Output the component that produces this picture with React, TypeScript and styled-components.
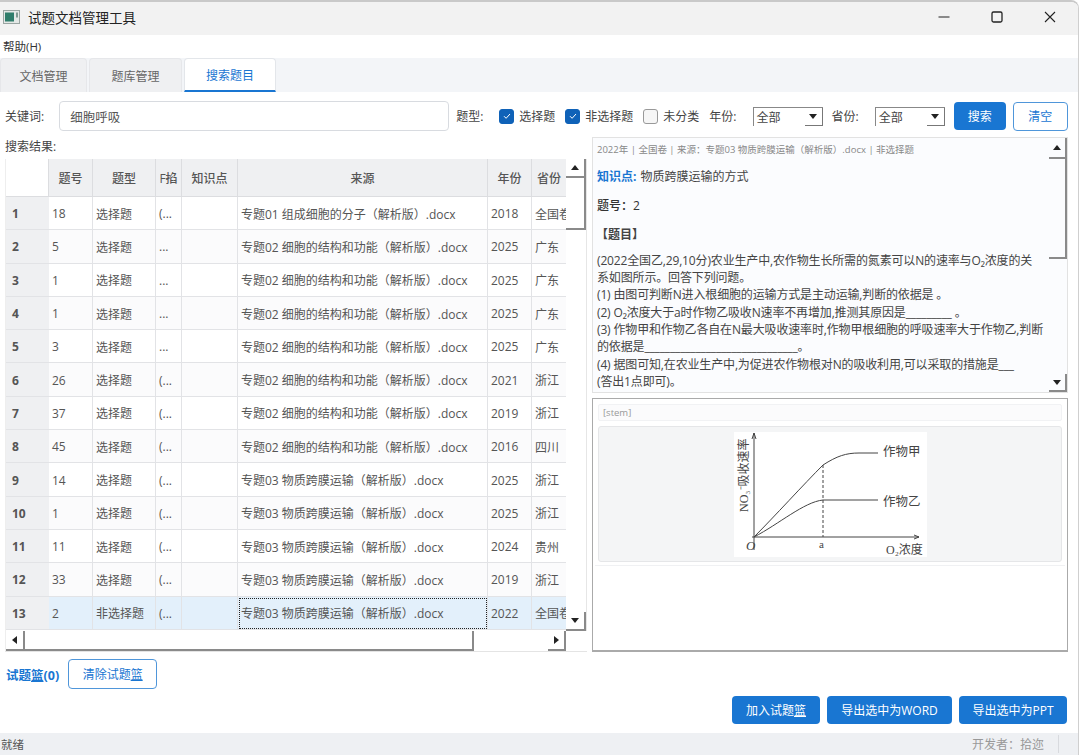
import styled, { createGlobalStyle } from 'styled-components';

const FONT = '"Open Sans", "Noto Sans CJK SC", sans-serif';

const rows = [
  ['1', '18', '选择题', '(...', '专题01 组成细胞的分子（解析版）.docx', '2018', '全国卷'],
  ['2', '5', '选择题', '...', '专题02 细胞的结构和功能（解析版）.docx', '2025', '广东'],
  ['3', '1', '选择题', '...', '专题02 细胞的结构和功能（解析版）.docx', '2025', '广东'],
  ['4', '1', '选择题', '...', '专题02 细胞的结构和功能（解析版）.docx', '2025', '广东'],
  ['5', '3', '选择题', '...', '专题02 细胞的结构和功能（解析版）.docx', '2025', '广东'],
  ['6', '26', '选择题', '(...', '专题02 细胞的结构和功能（解析版）.docx', '2021', '浙江'],
  ['7', '37', '选择题', '(...', '专题02 细胞的结构和功能（解析版）.docx', '2019', '浙江'],
  ['8', '45', '选择题', '(...', '专题02 细胞的结构和功能（解析版）.docx', '2016', '四川'],
  ['9', '14', '选择题', '(...', '专题03 物质跨膜运输（解析版）.docx', '2025', '浙江'],
  ['10', '1', '选择题', '(...', '专题03 物质跨膜运输（解析版）.docx', '2025', '浙江'],
  ['11', '11', '选择题', '(...', '专题03 物质跨膜运输（解析版）.docx', '2024', '贵州'],
  ['12', '33', '选择题', '(...', '专题03 物质跨膜运输（解析版）.docx', '2019', '浙江'],
  ['13', '2', '非选择题', '(...', '专题03 物质跨膜运输（解析版）.docx', '2022', '全国卷'],
];

const GlobalStyle = createGlobalStyle`
  html, body { margin: 0; padding: 0; background: #fff; }
  body { font-family: ${FONT}; font-size: 12px; color: #444; overflow: hidden; }
`;

const Window = styled.div`
  width: 1079px;
  height: 755px;
  display: flex;
  flex-direction: column;
  box-sizing: border-box;
  border-top: 2px solid #c9c9c9;
  border-right: 1px solid #cfcfcf;
  border-top-right-radius: 8px;
  overflow: hidden;
  background: #fff;
`;

const TitleBar = styled.div`
  height: 33px;
  flex: none;
  box-sizing: border-box;
  display: flex;
  align-items: center;
  background: #f2f2f2;
  padding: 0 0 3px 3px;
`;

const AppIcon = styled.svg`
  width: 18px;
  height: 14px;
  margin-right: 7px;
`;

const WindowTitle = styled.div`
  font-size: 13.5px;
  color: #222;
  flex: 1;
`;

const WindowButton = styled.svg`
  width: 14px;
  height: 14px;
  margin-right: 39px;
  &:last-child { margin-right: 21px; }
`;

const MenuBar = styled.div`
  height: 23px;
  flex: none;
  padding-left: 3px;
  line-height: 24px;
  font-size: 11.5px;
  color: #333;
`;

const TabBar = styled.div`
  height: 34px;
  flex: none;
  display: flex;
  gap: 2px;
  background: #f3f5f8;
`;

const Tab = styled.div<{ $active?: boolean; $width: number }>`
  width: ${p => p.$width}px;
  box-sizing: border-box;
  display: flex;
  align-items: center;
  justify-content: center;
  border-radius: 4px 4px 0 0;
  color: ${p => (p.$active ? '#1976d2' : '#666')};
  background: ${p => (p.$active ? '#fff' : '#eff0f2')};
  border: 1px solid ${p => (p.$active ? '#e3e6ea' : '#e6e7ea')};
  border-bottom: ${p => (p.$active ? '2px solid #1976d2' : 'none')};
`;

const Content = styled.div`
  flex: 1;
  min-height: 0;
  display: flex;
  flex-direction: column;
  padding: 9px 10px 9px 5px;
`;

const SearchRow = styled.div`
  height: 30px;
  flex: none;
  display: flex;
  align-items: center;
`;

const Label = styled.span<{ $gap?: number }>`
  flex: none;
  color: #444;
  white-space: nowrap;
  margin-right: ${p => p.$gap ?? 0}px;
`;

const SearchInput = styled.div`
  width: 390px;
  height: 30px;
  flex: none;
  box-sizing: border-box;
  margin: 0 7px 0 15px;
  padding-left: 10px;
  display: flex;
  align-items: center;
  border: 1px solid #d8dbe0;
  border-radius: 4px;
  font-size: 12.5px;
  color: #555;
`;

const Check = styled.span<{ $on?: boolean }>`
  width: 15px;
  height: 15px;
  flex: none;
  box-sizing: border-box;
  display: inline-flex;
  align-items: center;
  justify-content: center;
  margin-right: 5px;
  border-radius: 3px;
  background: ${p => (p.$on ? '#0f62b8' : '#f6f6f6')};
  border: 1px solid ${p => (p.$on ? '#0f62b8' : '#999')};
`;

const CheckItem = styled.div`
  flex: none;
  display: flex;
  align-items: center;
  white-space: nowrap;
  margin-right: 10px;
`;

const Combo = styled.div`
  width: 70px;
  height: 19px;
  flex: none;
  box-sizing: border-box;
  margin: 0 9px 0 16px;
  padding-left: 3px;
  display: flex;
  align-items: center;
  justify-content: space-between;
  border-top: 1px solid #888;
  border-left: 1px solid #888;
  color: #444;
`;

const ComboArrow = styled.span`
  width: 18px;
  height: 18px;
  box-sizing: border-box;
  display: flex;
  align-items: center;
  justify-content: center;
  border-right: 1px solid #777;
  border-bottom: 1px solid #777;
`;

const Caret = styled.i<{ $dir: 'up' | 'down' | 'left' | 'right' }>`
  display: block;
  width: 0;
  height: 0;
  border-style: solid;
  border-color: transparent;
  ${p => (p.$dir === 'up' ? 'border-width: 0 4px 5px; border-bottom-color: #222;' : '')}
  ${p => (p.$dir === 'down' ? 'border-width: 5px 4px 0; border-top-color: #222;' : '')}
  ${p => (p.$dir === 'left' ? 'border-width: 4px 5px 4px 0; border-right-color: #222;' : '')}
  ${p => (p.$dir === 'right' ? 'border-width: 4px 0 4px 5px; border-left-color: #222;' : '')}
`;

const PrimaryButton = styled.button<{ $width: number }>`
  width: ${p => p.$width}px;
  height: 28px;
  flex: none;
  padding: 0;
  border: none;
  border-radius: 4px;
  background: #1976d2;
  color: #fff;
  font: 12px ${FONT};
`;

const OutlineButton = styled.button<{ $width: number; $height: number; $left?: number }>`
  width: ${p => p.$width}px;
  height: ${p => p.$height}px;
  flex: none;
  margin-left: ${p => p.$left ?? 0}px;
  padding: 0;
  border: 1px solid #4f96da;
  border-radius: 4px;
  background: #fff;
  color: #1976d2;
  font: 12px ${FONT};
`;

const Main = styled.div`
  flex: none;
  height: 515px;
  margin-top: 6px;
  display: flex;
  gap: 5px;
`;

const LeftColumn = styled.div`
  width: 582px;
  display: flex;
  flex-direction: column;
`;

const ResultLabel = styled.div`
  height: 22px;
  line-height: 20px;
  color: #444;
  flex: none;
`;

const TableFrame = styled.div`
  height: 493px;
  box-sizing: border-box;
  display: grid;
  grid-template-columns: 561px 21px;
  grid-template-rows: 472px 20px;
  border-bottom: 1px solid #e4e4e4;
`;

const Table = styled.div`
  overflow: hidden;
  display: grid;
  grid-template-columns: 43px 44px 63px 26px 56px 250px 44px 35px;
  grid-template-rows: 38px;
  grid-auto-rows: 33.3px;
  border-left: 1px solid #eee;
`;

const HeadCell = styled.div<{ $blank?: boolean }>`
  box-sizing: border-box;
  display: flex;
  align-items: center;
  justify-content: center;
  overflow: hidden;
  white-space: nowrap;
  font-weight: 500;
  color: #555;
  background: ${p => (p.$blank ? '#fff' : '#eff0f2')};
  border-right: 1px solid #dcdde0;
  border-bottom: 1px solid #dcdde0;
`;

const RowHead = styled.div`
  box-sizing: border-box;
  display: flex;
  align-items: center;
  padding: 1px 0 0 6px;
  font-weight: 700;
  color: #555;
  background: #eff0f2;
  border-bottom: 1px solid #e2e3e6;
`;

const Cell = styled.div<{ $selected?: boolean; $alt?: boolean; $focus?: boolean }>`
  box-sizing: border-box;
  display: flex;
  align-items: center;
  padding: 1px 0 0 3px;
  overflow: hidden;
  white-space: nowrap;
  color: #555;
  background: ${p => (p.$selected ? '#e3f0fb' : p.$alt ? '#fbfbfc' : '#fff')};
  border-right: 1px solid #e2e3e6;
  border-bottom: 1px solid #e2e3e6;
  ${p => (p.$focus ? 'outline: 1px dotted #222; outline-offset: -2px;' : '')}
`;

const VScroll = styled.div`
  display: flex;
  flex-direction: column;
  justify-content: space-between;
  border-right: 1px solid #e6e6e6;
`;

const ThumbV = styled.div<{ $height: number }>`
  height: ${p => p.$height}px;
  box-sizing: border-box;
  border-right: 2px solid #8a8a8a;
  border-bottom: 2px solid #8a8a8a;
`;

const ScrollTop = styled.div`
  display: flex;
  flex-direction: column;
`;

const ScrollButton = styled.div<{ $w: number; $h: number }>`
  width: ${p => p.$w}px;
  height: ${p => p.$h}px;
  flex: none;
  box-sizing: border-box;
  display: flex;
  align-items: center;
  justify-content: center;
  border-right: 2px solid #8a8a8a;
  border-bottom: 2px solid #8a8a8a;
`;

const HScroll = styled.div`
  display: flex;
  align-items: stretch;
  border-left: 1px solid #eee;
`;

const ThumbH = styled.div`
  width: 449px;
  box-sizing: border-box;
  border-right: 2px solid #8a8a8a;
  border-bottom: 2px solid #8a8a8a;
`;

const HSpacer = styled.div`
  flex: 1;
`;

const RightColumn = styled.div`
  width: 476px;
  display: flex;
  flex-direction: column;
  gap: 5px;
`;

const TextPanel = styled.div`
  height: 256px;
  flex: none;
  display: flex;
  overflow: hidden;
  box-sizing: border-box;
  border: 1px solid #e2e2e2;
  background: #fbfcfe;
`;

const TextBody = styled.div`
  flex: 1;
  padding: 5px 0 0 4px;
  overflow: hidden;
  color: #444;
`;

const MetaLine = styled.div`
  font-size: 9.5px;
  line-height: 14px;
  color: #888;
  margin-bottom: 11px;
`;

const Para = styled.div<{ $strong?: boolean }>`
  line-height: 17.3px;
  margin-bottom: 11.5px;
  font-weight: ${p => (p.$strong ? 500 : 400)};
  color: ${p => (p.$strong ? '#333' : '#444')};
`;

const Keyword = styled.b`
  color: #1976d2;
  font-weight: 700;
  margin-right: 4px;
`;

const Heading = styled.div`
  font-weight: 700;
  line-height: 17.3px;
  margin-bottom: 9px;
  margin-left: -1px;
`;

const Stem = styled.div`
  line-height: 17.3px;
  white-space: pre;
  letter-spacing: -0.15px;
`;

const TextScroll = styled.div`
  width: 18px;
  flex: none;
  display: flex;
  flex-direction: column;
  justify-content: space-between;
`;

const ImagePanel = styled.div`
  flex: 1;
  box-sizing: border-box;
  padding: 5px 5px 0;
  border: 1px solid #aaa;
  border-bottom-width: 2px;
  background: #fff;
`;

const FigureCard = styled.div`
  padding-bottom: 3px;
  margin: 0 -3px;
  padding-left: 3px;
  padding-right: 3px;
  border-bottom: 1px solid #f0f1f3;
`;

const StemTag = styled.div`
  height: 15px;
  line-height: 15px;
  padding-left: 4px;
  font-size: 9.5px;
  color: #999;
  border: 1px solid #f1f2f4;
  border-radius: 2px;
  background: #fbfbfc;
`;

const FigureBox = styled.div`
  margin-top: 5px;
  height: 134px;
  display: flex;
  justify-content: center;
  align-items: center;
  border: 1px solid #e5e6e8;
  border-radius: 3px;
  background: #f4f5f6;
`;

const Figure = styled.svg`
  width: 193px;
  height: 125px;
  background: #fff;
`;

const BottomRow = styled.div`
  flex: none;
  display: flex;
  align-items: center;
  height: 30px;
  margin-top: 7px;
`;

const BasketLabel = styled.span`
  color: #1976d2;
  font-weight: 700;
  font-size: 12.5px;
  margin: 0 9px 0 1px;
  white-space: nowrap;
`;

const Mnemonic = styled.span`
  text-decoration: underline;
`;

const ActionRow = styled.div`
  flex: none;
  display: flex;
  justify-content: flex-end;
  gap: 7px;
  margin: 7px 1px 0 0;
`;

const StatusBar = styled.div`
  height: 22px;
  flex: none;
  display: flex;
  align-items: center;
  justify-content: space-between;
  padding: 0 19px 0 1px;
  background: #eef0f3;
  color: #555;
  font-size: 11.5px;
`;

const Developer = styled.span`
  color: #999;
  font-size: 12px;
  padding-right: 14px;
  border-right: 1px solid #d8dade;
`;

const CheckMark = () => (
  <svg width="10" height="10" viewBox="0 0 10 10">
    <path d="M2 5.2l2.1 2.1L8 3" stroke="#fff" strokeWidth="1" fill="none" />
  </svg>
);

const STEM = [
  '(2022全国乙,29,10分)农业生产中,农作物生长所需的氮素可以N的速率与O₂浓度的关',
  '系如图所示。回答下列问题。',
  '(1) 由图可判断N进入根细胞的运输方式是主动运输,判断的依据是 。',
  '(2) O₂浓度大于a时作物乙吸收N速率不再增加,推测其原因是_________ 。',
  '(3) 作物甲和作物乙各自在N最大吸收速率时,作物甲根细胞的呼吸速率大于作物乙,判断',
  '的依据是______________________________。',
  '(4) 据图可知,在农业生产中,为促进农作物根对N的吸收利用,可以采取的措施是___',
  '(答出1点即可)。',
].join('\n');

export default function App() {
  return (
    <Window>
      <GlobalStyle />
      <TitleBar>
        <AppIcon viewBox="0 0 18 14">
          <rect x="0.5" y="0.5" width="16" height="13" fill="#e4e8e6" stroke="#9aa5a2" />
          <rect x="2" y="2.5" width="9" height="9" fill="#2f7d6b" />
          <rect x="13" y="2.5" width="2" height="5" fill="#7f9a92" />
        </AppIcon>
        <WindowTitle>试题文档管理工具</WindowTitle>
        <WindowButton viewBox="0 0 14 14">
          <path d="M1.5 7h11" stroke="#222" strokeWidth="1" fill="none" />
        </WindowButton>
        <WindowButton viewBox="0 0 14 14">
          <rect x="2" y="2" width="10" height="10" rx="1.5" stroke="#222" strokeWidth="1.3" fill="none" />
        </WindowButton>
        <WindowButton viewBox="0 0 14 14">
          <path d="M2 2l10 10M12 2L2 12" stroke="#222" strokeWidth="1.1" fill="none" />
        </WindowButton>
      </TitleBar>
      <MenuBar>帮助(H)</MenuBar>
      <TabBar>
        <Tab $width={87}>文档管理</Tab>
        <Tab $width={93}>题库管理</Tab>
        <Tab $width={92} $active>搜索题目</Tab>
      </TabBar>
      <Content>
        <SearchRow>
          <Label>关键词:</Label>
          <SearchInput>细胞呼吸</SearchInput>
          <Label $gap={16}>题型:</Label>
          <CheckItem>
            <Check $on><CheckMark /></Check>
            选择题
          </CheckItem>
          <CheckItem>
            <Check $on><CheckMark /></Check>
            非选择题
          </CheckItem>
          <CheckItem>
            <Check />
            未分类
          </CheckItem>
          <Label>年份:</Label>
          <Combo>
            全部
            <ComboArrow><Caret $dir="down" /></ComboArrow>
          </Combo>
          <Label>省份:</Label>
          <Combo>
            全部
            <ComboArrow><Caret $dir="down" /></ComboArrow>
          </Combo>
          <PrimaryButton $width={52}>搜索</PrimaryButton>
          <OutlineButton $width={55} $height={29} $left={7}>清空</OutlineButton>
        </SearchRow>
        <Main>
          <LeftColumn>
            <ResultLabel>搜索结果:</ResultLabel>
            <TableFrame>
              <Table>
                <HeadCell $blank />
                <HeadCell>题号</HeadCell>
                <HeadCell>题型</HeadCell>
                <HeadCell>F掐</HeadCell>
                <HeadCell>知识点</HeadCell>
                <HeadCell>来源</HeadCell>
                <HeadCell>年份</HeadCell>
                <HeadCell>省份</HeadCell>
                {rows.map((r, i) => {
                  const selected = i === rows.length - 1;
                  const alt = i % 2 === 1;
                  return [
                    <RowHead key={`${i}_h`}>{r[0]}</RowHead>,
                    <Cell key={`${i}_no`} $selected={selected} $alt={alt}>{r[1]}</Cell>,
                    <Cell key={`${i}_type`} $selected={selected} $alt={alt}>{r[2]}</Cell>,
                    <Cell key={`${i}_ans`} $selected={selected} $alt={alt}>{r[3]}</Cell>,
                    <Cell key={`${i}_kp`} $selected={selected} $alt={alt} />,
                    <Cell key={`${i}_src`} $selected={selected} $alt={alt} $focus={selected}>{r[4]}</Cell>,
                    <Cell key={`${i}_year`} $selected={selected} $alt={alt}>{r[5]}</Cell>,
                    <Cell key={`${i}_prov`} $selected={selected} $alt={alt}>{r[6]}</Cell>,
                  ];
                })}
              </Table>
              <VScroll>
                <ScrollTop>
                  <ScrollButton $w={20} $h={19}><Caret $dir="up" /></ScrollButton>
                  <ThumbV $height={52} />
                </ScrollTop>
                <ScrollButton $w={20} $h={19}><Caret $dir="down" /></ScrollButton>
              </VScroll>
              <HScroll>
                <ScrollButton $w={19} $h={20}><Caret $dir="left" /></ScrollButton>
                <ThumbH />
                <HSpacer />
                <ScrollButton $w={18} $h={20}><Caret $dir="right" /></ScrollButton>
              </HScroll>
            </TableFrame>
          </LeftColumn>
          <RightColumn>
            <TextPanel>
              <TextBody>
                <MetaLine>2022年 | 全国卷 | 来源：专题03 物质跨膜运输（解析版）.docx | 非选择题</MetaLine>
                <Para><Keyword>知识点:</Keyword>物质跨膜运输的方式</Para>
                <Para $strong>题号：2</Para>
                <Heading>【题目】</Heading>
                <Stem>{STEM}</Stem>
              </TextBody>
              <TextScroll>
                <ScrollTop>
                  <ScrollButton $w={18} $h={21}><Caret $dir="up" /></ScrollButton>
                  <ThumbV $height={100} />
                </ScrollTop>
                <ScrollButton $w={18} $h={18}><Caret $dir="down" /></ScrollButton>
              </TextScroll>
            </TextPanel>
            <ImagePanel>
              <FigureCard>
                <StemTag>[stem]</StemTag>
                <FigureBox>
                  <Figure viewBox="0 0 193 125">
                    <path d="M20 118V1M18 7l2-6 2 6" stroke="#444" strokeWidth="1" fill="none" />
                    <path d="M18 105H185M180 103l5 2-5 2" stroke="#444" strokeWidth="1" fill="none" />
                    <path d="M20 105C40 85 70 52 89 33C103 24 112 21 125 21H144" stroke="#444" strokeWidth="1" fill="none" />
                    <path d="M20 105C45 92 70 70 89 68H144" stroke="#444" strokeWidth="1" fill="none" />
                    <path d="M89 33V105" stroke="#444" strokeWidth="1" strokeDasharray="3 2" fill="none" />
                    <text x="149" y="24" fontSize="12.5" fontFamily="Noto Sans CJK SC, serif" fill="#444">作物甲</text>
                    <text x="149" y="74" fontSize="12.5" fontFamily="Noto Sans CJK SC, serif" fill="#444">作物乙</text>
                    <text x="12" y="118" fontSize="13" fontStyle="italic" fontFamily="Liberation Serif, serif" fill="#444">O</text>
                    <text x="85" y="116" fontSize="11" fontFamily="Liberation Serif, serif" fill="#444">a</text>
                    <text x="152" y="122" fontSize="12" fontFamily="Liberation Serif, Noto Sans CJK SC, serif" fill="#444">O₂浓度</text>
                    <text transform="translate(14 80) rotate(-90)" fontSize="12" fontFamily="Liberation Serif, Noto Sans CJK SC, serif" fill="#444">NO₃⁻吸收速率</text>
                  </Figure>
                </FigureBox>
              </FigureCard>
            </ImagePanel>
          </RightColumn>
        </Main>
        <BottomRow>
          <BasketLabel>试题<Mnemonic>篮</Mnemonic>(0)</BasketLabel>
          <OutlineButton $width={89} $height={30}>清除试题<Mnemonic>篮</Mnemonic></OutlineButton>
        </BottomRow>
        <ActionRow>
          <PrimaryButton $width={88}>加入试题<Mnemonic>篮</Mnemonic></PrimaryButton>
          <PrimaryButton $width={125}>导出选中为WORD</PrimaryButton>
          <PrimaryButton $width={108}>导出选中为PPT</PrimaryButton>
        </ActionRow>
      </Content>
      <StatusBar>
        就绪
        <Developer>开发者：拾迩</Developer>
      </StatusBar>
    </Window>
  );
}
